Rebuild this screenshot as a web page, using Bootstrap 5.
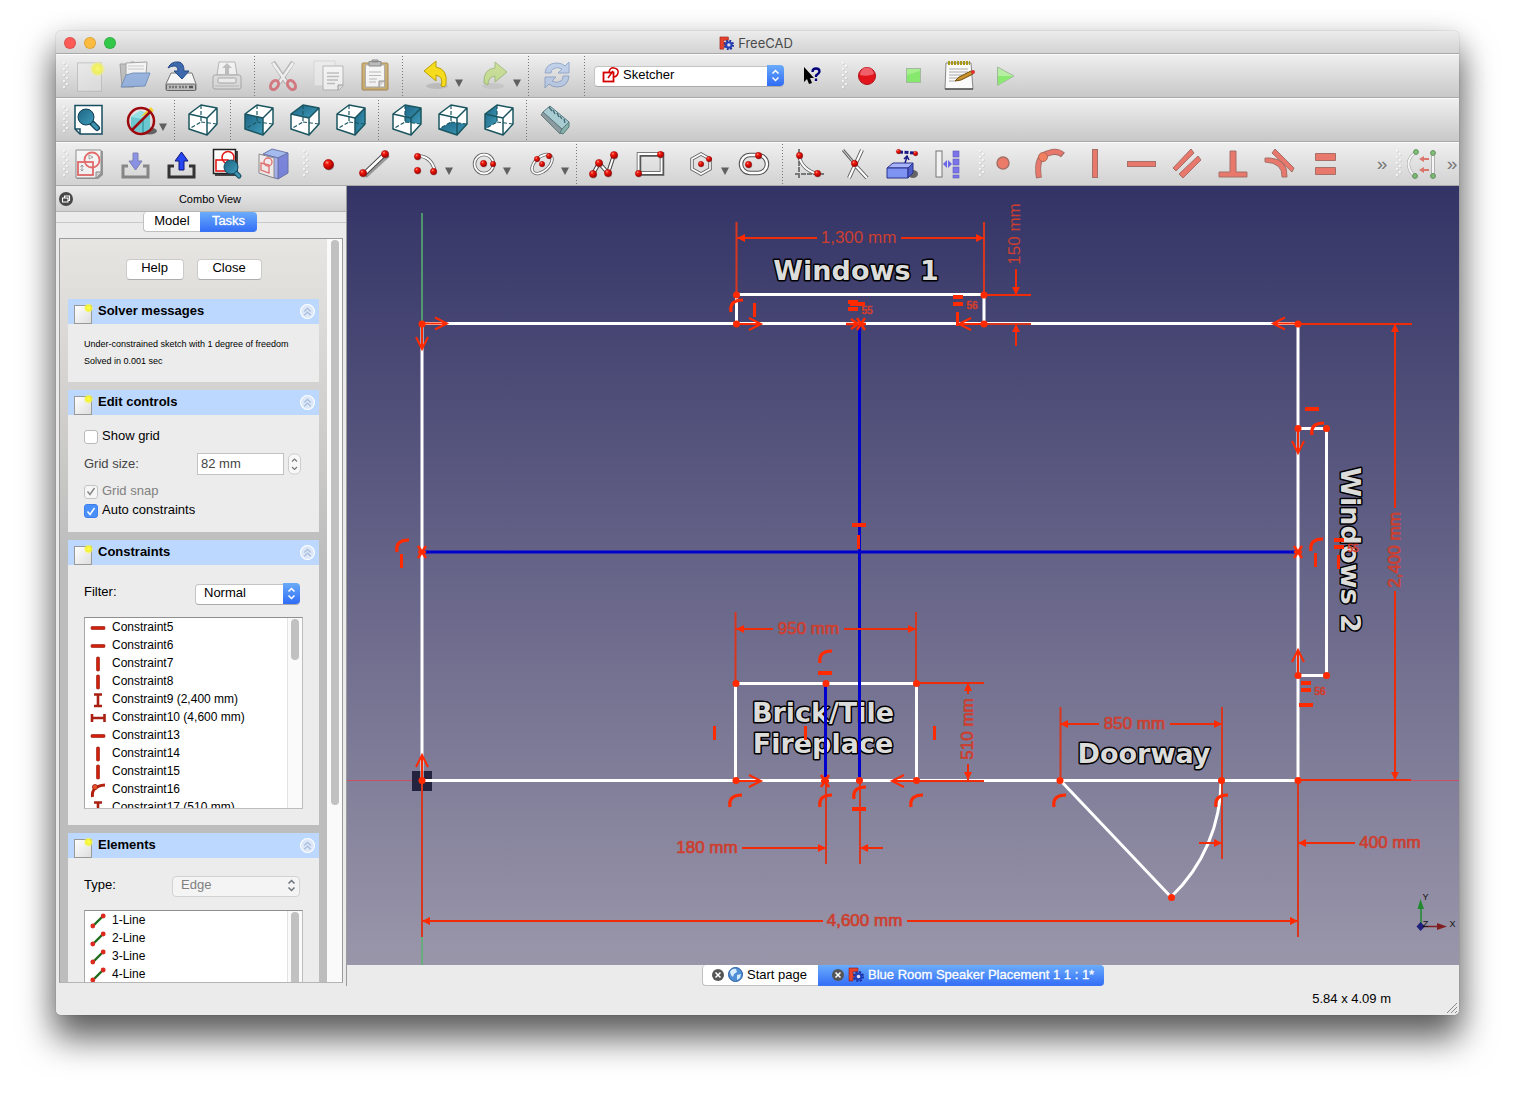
<!DOCTYPE html>
<html lang="en">
<head>
<meta charset="utf-8">
<meta name="viewport" content="width=device-width, initial-scale=1">
<title>FreeCAD</title>
<link href="https://cdn.jsdelivr.net/npm/bootstrap@5.3.0/dist/css/bootstrap.min.css" rel="stylesheet">
<style>
body{font-family:"Liberation Sans",Arial,sans-serif;font-size:13px;line-height:20px;color:#000;background:#fff;padding:31px 56px 80px;min-height:100vh;overflow-x:hidden}
.app-window{border-radius:5px;background:#ebebeb;flex:1;overflow:hidden;min-width:0}
.app-shell{min-height:calc(100vh - 111px);border-radius:5px;box-shadow:0 0 1px rgba(0,0,0,.5),0 22px 34px 2px rgba(0,0,0,.6),0 4px 28px rgba(0,0,0,.12)}
.title-bar{height:23px;background:linear-gradient(#ececec,#d3d3d3);border-bottom:1px solid #a9a9a9;color:#4a4a4a;font-family:Inter,sans-serif;position:relative;padding:2px 3px 0 0}
.lights{position:absolute;left:8px;top:6px;gap:8px}
.light{width:12px;height:12px;border-radius:50%;border:1px solid rgba(0,0,0,.12)}
.light.red{background:#fc5b57}.light.amber{background:#fdbc40}.light.green{background:#34c84a}
.tool-bar{height:44px;background:linear-gradient(#efefef,#c8c8c8);border-top:1px solid #fbfbfb;border-bottom:1px solid #a9a9a9}
.tool-bar.last{background:linear-gradient(#efefef,#d2d2d2)}
.tool{width:46px;height:42px;padding:0;border:0;background:none;flex:none}
.tool.drop{width:58px;padding-left:8px}
.tool svg.ico{width:32px;height:32px;display:inline-block;overflow:visible}
.tool.drop svg.ico{margin-left:4px}
.dropmark{width:8px;height:8px;margin:14px 0 0 3px}
.dim{opacity:.5}
.grip{width:20px;height:30px;margin-right:-10px;flex:none}
.grip svg{display:block;width:8px;height:30px;margin:0 auto}
.divide{width:10px;height:40px;flex:none;background:repeating-linear-gradient(#777 0 1px,transparent 1px 3px) 4px 0/1px 100% no-repeat}
.more{width:14px;flex:none;color:#777;font-size:19px;padding:0;border:0;background:none;line-height:20px;text-align:center}
.pick{position:relative}
.pick select{appearance:none;width:100%;height:21px;border:1px solid #c4c4c4;border-bottom-color:#aaa;border-radius:4px;background:#fff;font-size:13px;line-height:16px;padding:0 28px 4px 8px;color:#000;opacity:1}
.pick .cap{position:absolute;right:0;top:0;width:17px;height:21px;border-radius:0 4px 4px 0;background:linear-gradient(#6aabfa,#2f6cf6);pointer-events:none}
.pick .lead-ico{position:absolute;left:8px;top:1px;pointer-events:none}
.pick.off select{background:#f4f4f4;color:#808080;border-color:#d2d2d2}
.pick.off .cap{background:none}
.bench{width:190px;margin:0 5px 0 4px}
.bench select{padding-left:28px}
.side{width:291px;flex:none;border-right:1px solid #9b9b9b}
.dock-head{height:26px;background:linear-gradient(#ececec,#d0d0d0);border-bottom:1px solid #b5b5b5;font-size:11px;position:relative;padding-left:18px}
.dock-head button{position:absolute;left:2px;top:5px;width:15px;height:15px;padding:0;border:0;background:none;line-height:1}
.seg{position:relative;height:26px;padding-right:2px;background:linear-gradient(#c9c9c9,#c9c9c9) 0 10px/100% 1px no-repeat}
.seg button,.doc-tabs button{border:1px solid #c0c0c0;border-width:0 0 1px 1px;background:#fff;height:21px;padding:0 0 2px;line-height:18px;color:#000;font-size:13px}
.seg button{height:20px;width:57px}
.seg button:first-child,.doc-tabs button:first-child{border-radius:4px 0 0 4px}
.seg button.on,.doc-tabs button.on{background:linear-gradient(#6bacfb,#3570f7);color:#fff;border-color:#3a74ee;border-left:0;border-radius:0 4px 4px 0;-webkit-text-stroke:.3px #fff}
.task-scroll{margin:0 3px;border:1px solid #9b9b9b;border-bottom-color:#b5b5b5;height:745px;background:#fafafa}
.task-list{width:267px;height:743px;overflow:hidden;flex:none;background:linear-gradient(#e7e5e1,#bdbdbd 43%);padding:20px 8px 0}
.track{flex:1;padding:1px 3px 0 4px}
.thumb{border-radius:4px;background:#c1c1c1;width:8px}
.thumb.tall{height:565px}
.push-row{gap:13px;margin-bottom:19px}
.push{height:21px;width:58px;border:1px solid #cbcbcb;border-bottom-color:#adadad;border-radius:4px;background:#fff;line-height:16px;padding:0 0 3px;color:#000}
.push.wide{width:65px}
.task{background:#ececec;margin-bottom:8px}
.task h2{height:25px;margin:0;background:#bcd8ff;font-size:13px;line-height:22px;font-weight:bold;padding:0 4px 0 5px}
.task h2 span{padding:0 0 2px 1px}
.task-in{padding:11px 16px 12px}
.solver{font-size:9px;line-height:17px;padding:12px 16px;white-space:nowrap}
.tick{appearance:none;width:14px;height:14px;margin:2px 4px 0 0;border:1px solid #b9b9b9;border-radius:3px;background:#fff;flex:none}
.tick:checked{background:#4a90fa;border-color:#3d80ec}
.tick:disabled{background:#f6f6f6;border-color:#c4c4c4}
.tick-box{position:relative}
.tick-box svg{position:absolute;left:0;top:4px;pointer-events:none}
.tick-box.snap{height:19px;margin-top:5px;color:#808080}
.tick-box.snap svg{top:3px}
.size-row{height:24px;margin-top:6px;color:#444;padding-right:1px}
.num{width:87px;height:22px;border:1px solid #c2c2c2;background:#fff;padding:0 3px 2px;color:#444;font-size:13px}
.list-in{padding:17px 16px 16px}
.filter-row{margin-bottom:13px;padding-right:3px}
.filter-row .pick{width:105px;height:21px;margin-top:1px}
.type-row{margin-bottom:14px;padding-right:3px}
.type-row .pick{width:128px;height:21px}
.listing{border:1px solid #9b9b9b;border-color:#8f8f8f #bdbdbd #bdbdbd #a8a8a8;background:#fff;width:219px;height:192px;overflow:hidden;font-size:12px;line-height:18px}
.listing ul{flex:1}
.listing li{padding-left:5px;height:18px;white-space:nowrap}
.listing li svg{width:16px;height:16px;margin-right:6px}
.list-track{width:15px;border-left:1px solid #e3e3e3;background:#fafafa;padding:1px 3px}
.thumb.short{height:41px}
.thumb.full{height:180px}
.view-col{min-width:0}
.stage{background:linear-gradient(#333366,#9a96aa);line-height:0}
.stage svg{width:100%;height:auto}
.doc-tabs{height:21px}
.doc-tabs button{display:flex;align-items:center;padding:0 0 1px 9px;width:116px}
.doc-tabs button.on{width:286px;padding-left:14px}
.status{height:29px;padding-right:68px;position:relative}
.status svg{position:absolute;right:1px;bottom:1px}
</style>
</head>
<body class="d-flex flex-column">
<svg width="0" height="0" class="position-absolute" aria-hidden="true">
<defs>
<radialGradient id="ball" cx=".35" cy=".3" r=".7"><stop offset="0" stop-color="#ff9a8c"/><stop offset=".3" stop-color="#f21a0c"/><stop offset="1" stop-color="#a00"/></radialGradient>
<linearGradient id="teal" x2="1" y2="1"><stop offset="0" stop-color="#1d6484"/><stop offset="1" stop-color="#3f9cba"/></linearGradient>
<linearGradient id="paper" x2="1" y2="1"><stop offset="0" stop-color="#fff"/><stop offset="1" stop-color="#ddd"/></linearGradient>
<radialGradient id="sun"><stop offset="0" stop-color="#ffff50"/><stop offset=".55" stop-color="#f2f233"/><stop offset="1" stop-color="#ffff66" stop-opacity="0"/></radialGradient>
<symbol id="dots" viewBox="0 0 8 30"><g fill="#b4b4b4"><circle cx="2.500" cy="2.500" r="1"/><circle cx="5.500" cy="5.500" r="1"/><circle cx="2.500" cy="8.500" r="1"/><circle cx="5.500" cy="11.500" r="1"/><circle cx="2.500" cy="14.500" r="1"/><circle cx="5.500" cy="17.500" r="1"/><circle cx="2.500" cy="20.500" r="1"/><circle cx="5.500" cy="23.500" r="1"/><circle cx="2.500" cy="26.500" r="1"/></g><g fill="#fff"><circle cx="2" cy="2" r="1"/><circle cx="5" cy="5" r="1"/><circle cx="2" cy="8" r="1"/><circle cx="5" cy="11" r="1"/><circle cx="2" cy="14" r="1"/><circle cx="5" cy="17" r="1"/><circle cx="2" cy="20" r="1"/><circle cx="5" cy="23" r="1"/><circle cx="2" cy="26" r="1"/></g></symbol>
<symbol id="dot" viewBox="0 0 10 10" overflow="visible"><circle cx="5.700" cy="6" r="4.500" fill="#555" opacity=".5"/><circle cx="5" cy="5" r="4.500" fill="url(#ball)" stroke="#900" stroke-width=".6"/></symbol>
<symbol id="cube" viewBox="0 0 32 32"><path d="M2 10 14 1 30 4 20 14ZM2 10V25L20 31V14M20 31 30 20V4" fill="none" stroke="#1b5660" stroke-width="1.500" stroke-linejoin="round"/><path d="M14 1V18L2 25M14 18 30 20" fill="none" stroke="#1b5660" stroke-width="1.200" stroke-dasharray="4 2"/></symbol>
<symbol id="page" viewBox="0 0 20 20"><rect x="1.500" y="1.500" width="17" height="18" fill="url(#paper)" stroke="#999"/><circle cx="15.500" cy="4" r="5" fill="url(#sun)"/></symbol>
<symbol id="fold" viewBox="0 0 14 14"><circle cx="7" cy="7" r="6.500" fill="#dce8f8" stroke="#fff"/><path d="M4 7 7 4 10 7M4 10.500 7 7.500 10 10.500" fill="none" stroke="#a9bcdc" stroke-width="1.200"/></symbol>
<symbol id="freecad" viewBox="0 0 16 16"><path d="M1 1H10V4.500H5V7H9V10H5V14H1Z" fill="#e8412c" stroke="#8b2018" stroke-width=".6"/><circle cx="10.500" cy="9.500" r="4.500" fill="none" stroke="#1a2f9a" stroke-width="2" stroke-dasharray="2 1.530"/><circle cx="10.500" cy="9.500" r="2.900" fill="#dde" stroke="#2440b8" stroke-width="2.200"/></symbol>
<symbol id="c-h" viewBox="0 0 16 16"><rect x="1" y="6.500" width="14" height="3" rx="1" fill="#d3200c" stroke="#8d1708" stroke-width=".6"/></symbol>
<symbol id="c-v" viewBox="0 0 16 16"><rect x="6.500" y="1" width="3" height="14" rx="1" fill="#d3200c" stroke="#8d1708" stroke-width=".6"/></symbol>
<symbol id="c-i" viewBox="0 0 16 16"><path d="M4 2.500H12M4 14H12M8 2.500V14" stroke="#a92012" stroke-width="2.600" fill="none"/></symbol>
<symbol id="c-w" viewBox="0 0 16 16"><path d="M2 4V12M14.500 4V12M2 8H14.500" stroke="#a92012" stroke-width="2.600" fill="none"/></symbol>
<symbol id="c-p" viewBox="0 0 16 16"><path d="M2.500 15Q1 4 15 3" stroke="#b3200f" stroke-width="3" fill="none"/><circle cx="5" cy="5" r="2.600" fill="#e8502a" stroke="#8d1708" stroke-width=".7"/></symbol>
<symbol id="l-line" viewBox="0 0 16 16"><path d="M3 13 13 3" stroke="#1f6b1c" stroke-width="2.400"/><circle cx="2.800" cy="13" r="2.400" fill="#dd2a20"/><circle cx="13.200" cy="3" r="2.400" fill="#dd2a20"/></symbol>
<symbol id="closer" viewBox="0 0 12 12"><circle cx="6" cy="6" r="6" fill="#555"/><path d="M3.500 3.500 8.500 8.500M8.500 3.500 3.500 8.500" stroke="#fff" stroke-width="1.500"/></symbol>
<symbol id="updown" viewBox="0 0 17 21"><path d="M5.500 8.500 8.500 5.500 11.500 8.500M5.500 12.500 8.500 15.500 11.500 12.500" fill="none" stroke="currentColor" stroke-width="1.500"/></symbol>
<symbol id="tri" viewBox="0 0 8 8"><path d="M0 .5H8L4 8Z" fill="#606060"/></symbol>
<symbol id="sk" viewBox="0 0 32 32"><rect x="5" y="14" width="15" height="13" fill="none" stroke="#e31b1b" stroke-width="1.800"/><circle cx="19" cy="12" r="7.500" fill="none" stroke="#e31b1b" stroke-width="1.800"/><path d="M9 17V23M7.500 19 9 17 10.500 19M7.500 21.500 9 23 10.500 21.500M16 7 20 9 16 11Z" fill="none" stroke="#555" stroke-width=".8"/></symbol>
</defs></svg>

<main class="app-shell d-flex flex-column flex-grow-1">
<div class="app-window d-flex flex-column">
<header class="title-bar d-flex align-items-center justify-content-center">
<div class="lights d-flex"><span class="light red"></span><span class="light amber"></span><span class="light green"></span></div>
<svg width="15" height="15" class="me-1"><use href="#freecad"/></svg><span>FreeCAD</span>
</header>

<nav class="tool-bar d-flex align-items-center" aria-label="File">
<span class="grip"><svg><use href="#dots"/></svg></span>
<button class="tool" aria-label="New"><svg class="ico" viewBox="0 0 32 32"><g opacity=".75"><rect x="4.500" y="3" width="24" height="28" fill="url(#paper)" stroke="#aaa"/><rect x="4.500" y="3" width="24" height="28" fill="#ddd" opacity=".6"/><circle cx="24.500" cy="9" r="8" fill="url(#sun)"/></g></svg></button>
<button class="tool" aria-label="Open"><svg class="ico" viewBox="0 0 32 32" opacity=".6"><path d="M1 4H10L12 2H15V27H3Z" fill="#aaa" stroke="#777"/><path d="M7 3 28 2 27 15H7Z" fill="#fff" stroke="#777"/><path d="M9 6H25M9 9H25" stroke="#bbb"/><path d="M7 15 14 13H31L26 26 2 27Z" fill="#6b9ae0" stroke="#3465a4"/></svg></button>
<button class="tool" aria-label="Save"><svg class="ico" viewBox="0 0 32 32"><path d="M6 13H27L31 24V30H1V24Z" fill="#f5f5f5" stroke="#777"/><rect x="1.500" y="24" width="29" height="6.500" rx="1" fill="#bbb" stroke="#666"/><path d="M4 27H13M14 27H22" stroke="#777" stroke-width="2.500" stroke-dasharray="2 1"/><path d="M24 27H28" stroke="#555" stroke-width="2.500"/><path d="M3 8Q6 1 14 2 19 3 19 11H24L17 19 9 11H13Q13 6 9 6 6 6 3 8Z" fill="#3f69ad" stroke="#234a86"/></svg></button>
<button class="tool" aria-label="Print"><svg class="ico dim" viewBox="0 0 32 32"><path d="M8 2H24L26 15H6Z" fill="#fff" stroke="#888"/><path d="M16 3 21 8H18V14H14V8H11Z" fill="#999"/><rect x="2" y="15" width="28" height="14" rx="2" fill="#ddd" stroke="#777"/><rect x="7" y="18" width="18" height="5" rx="1" fill="#fff" stroke="#777"/><path d="M4 26H28" stroke="#999"/></svg></button>
<span class="divide"></span>
<button class="tool" aria-label="Cut"><svg class="ico dim" viewBox="0 0 32 32"><path d="M6 2 20 23M26 2 12 23" stroke="#888" stroke-width="4.500"/><path d="M6 3 20 23M26 3 12 23" stroke="#fff" stroke-width="2.500"/><ellipse cx="7.500" cy="25" rx="3.500" ry="5" transform="rotate(35 7.500 25)" fill="none" stroke="#d02030" stroke-width="3"/><ellipse cx="24.500" cy="25" rx="3.500" ry="5" transform="rotate(-35 24.500 25)" fill="none" stroke="#d02030" stroke-width="3"/></svg></button>
<button class="tool" aria-label="Copy"><svg class="ico" viewBox="0 0 32 32" opacity=".6"><path d="M1 1H22V26H1Z" fill="#eee" stroke="#ccc"/><path d="M10 6H30V26L26 30H10Z" fill="#fff" stroke="#999"/><path d="M14 13H26M14 16.500H26M14 20H25M14 23.500H22" stroke="#aaa" stroke-width="1.300"/><path d="M30 25H25V30" fill="#ddd" stroke="#777"/></svg></button>
<button class="tool" aria-label="Paste"><svg class="ico" viewBox="0 0 32 32" opacity=".7"><rect x="3" y="3" width="26" height="27" rx="1" fill="#c39a48" stroke="#8f6b20"/><rect x="6.500" y="5" width="19" height="22" fill="#fff" stroke="#999"/><path d="M10 1.500H22V6H10ZM13 0H19V2H13Z" fill="#aaa" stroke="#666"/><path d="M10 12H22M10 15.500H22M10 19H18M10 22H17" stroke="#aaa" stroke-width="1.200"/><path d="M26 21H20V27" fill="#ccc" stroke="#777"/></svg></button>
<span class="divide"></span>
<button class="tool drop d-flex align-items-center" aria-label="Undo"><svg class="ico" viewBox="0 0 32 32"><ellipse cx="17" cy="26" rx="11" ry="3" fill="#999" opacity=".4"/><path d="M4 11 16 1V7Q28 9 26 24 25 28 21 26 24 17 16 15V21Z" fill="#f6dc1c" stroke="#b9a00a"/></svg><svg class="dropmark"><use href="#tri"/></svg></button>
<button class="tool drop d-flex align-items-center" aria-label="Redo"><svg class="ico" viewBox="0 0 32 32" opacity=".5"><ellipse cx="15" cy="26" rx="11" ry="3" fill="#999" opacity=".4"/><path d="M29 12 17 2V8Q5 9 6 23L10 25Q10 17 17 16V22Z" fill="#b0dc50" stroke="#6a9a28"/></svg><svg class="dropmark"><use href="#tri"/></svg></button>
<span class="divide"></span>
<button class="tool" aria-label="Refresh"><svg class="ico" viewBox="0 0 32 32" opacity=".5"><path d="M4 13Q5 3 16 3 21 3 24 6L28 2V13H17L21 9Q16 6 12 9 10 10 10 13Z" fill="#9cbcee" stroke="#4c72b4"/><path d="M28 16Q27 27 16 27 11 27 8 24L4 28V17H15L11 21Q16 24 20 21 22 20 22 16Z" fill="#9cbcee" stroke="#4c72b4"/></svg></button>
<span class="divide"></span>
<div class="pick bench"><select aria-label="Workbench"><option>Sketcher</option></select><svg class="lead-ico" width="18" height="18" viewBox="0 0 18 18"><rect x="1.500" y="6.500" width="10" height="9" fill="none" stroke="#d40000" stroke-width="1.800"/><path d="M7 6Q8 1 12 2 17 3 16 7 15 11 11 11M11 5 6 12" fill="none" stroke="#d40000" stroke-width="1.500"/></svg><svg class="cap text-white"><use href="#updown"/></svg></div>
<button class="tool" aria-label="What's this"><svg class="ico" viewBox="0 0 32 32"><path d="M8 7V22L11 19 13 24 16 23 14 18H18Z" fill="#000"/><path d="M16.500 12Q16.500 8.500 20 8.500 23.500 8.500 23.500 11.500 23.500 13 20 15.500V17M20 18.500V21" fill="none" stroke="#00007a" stroke-width="2.300"/></svg></button>
<span class="grip"><svg><use href="#dots"/></svg></span>
<button class="tool" aria-label="Record macro"><svg class="ico" viewBox="0 0 32 32"><circle cx="15" cy="16" r="8.500" fill="#e2141c" stroke="#b01018"/><path d="M8 15A7 7 0 0 1 22 14Q15 17 8 15Z" fill="#f0606a"/></svg></button>
<button class="tool" aria-label="Stop macro"><svg class="ico" viewBox="0 0 32 32"><rect x="8.500" y="8.500" width="14" height="14" fill="#a5ef8d" stroke="#a4b8a0"/><path d="M9 15 22 11V22H9Z" fill="#86e86c"/></svg></button>
<button class="tool" aria-label="Macros"><svg class="ico" viewBox="0 0 32 32"><path d="M2 3H27L29 29H1Z" fill="#fafafa" stroke="#888"/><path d="M1 29H29" stroke="#555" stroke-width="1.500"/><path d="M4 3H26" stroke="#a89a18" stroke-width="4" stroke-dasharray="2 1"/><path d="M5 9H24M5 12H24M5 15H19M5 18H17M5 21H11" stroke="#aaa"/><path d="M11 21 15 17 27 11 29 14 17 20Z" fill="#c9922a" stroke="#704c0c"/><circle cx="29" cy="12" r="2" fill="#d33"/></svg></button>
<button class="tool" aria-label="Run macro"><svg class="ico" viewBox="0 0 32 32"><path d="M7.500 7 24 16 7.500 25.500Z" fill="#b6efa2" stroke="#a2b89e"/><path d="M8 16H23L8 25Z" fill="#8aea70"/></svg></button>
</nav>

<nav class="tool-bar d-flex align-items-center" aria-label="View">
<span class="grip"><svg><use href="#dots"/></svg></span>
<button class="tool" aria-label="Fit all"><svg class="ico" viewBox="0 0 32 32"><path d="M2 1.500H29V30H7L2 25Z" fill="#fff" stroke="#164c60" stroke-width="1.500"/><path d="M2 25H7V30" fill="none" stroke="#164c60" stroke-width="1.500"/><path d="M19 19 24 24" stroke="#123e54" stroke-width="6" stroke-linecap="round"/><path d="M20 20 24 24" stroke="#3f93b0" stroke-width="3.500" stroke-linecap="round"/><circle cx="13" cy="13" r="8" fill="url(#teal)" stroke="#123e54"/></svg></button>
<button class="tool drop d-flex align-items-center" aria-label="Draw style"><svg class="ico" viewBox="0 0 32 32"><ellipse cx="25" cy="27" rx="8" ry="3.500" fill="#333" opacity=".7"/><path d="M7 13 16 7 26 10V25L19 29 7 26Z" fill="#6cc8d0"/><path d="M7 13 16 7 26 10 19 15Z" fill="#97e2e6"/><path d="M19 15V29" stroke="#1e8a94"/><path d="M16 13 27 3 30 7Z" fill="#f0d431"/><circle cx="17" cy="17" r="13" fill="none" stroke="#9c0a10" stroke-width="2.500"/><path d="M7.500 26.500 26.500 7.500" stroke="#9c0a10" stroke-width="2.500"/></svg><svg class="dropmark"><use href="#tri"/></svg></button>
<span class="divide"></span>
<button class="tool" aria-label="Axonometric"><svg class="ico"><path d="M2 10 14 1 30 4V20L20 31 2 25Z" fill="#fff"/><use href="#cube"/></svg></button>
<span class="divide"></span>
<button class="tool" aria-label="Front"><svg class="ico"><path d="M2 10 14 1 30 4V20L20 31 2 25Z" fill="#fff"/><path d="M2 10 20 14V31L2 25Z" fill="url(#teal)"/><use href="#cube"/></svg></button>
<button class="tool" aria-label="Top"><svg class="ico"><path d="M2 10 14 1 30 4V20L20 31 2 25Z" fill="#fff"/><path d="M2 10 14 1 30 4 20 14Z" fill="url(#teal)"/><use href="#cube"/></svg></button>
<button class="tool" aria-label="Right"><svg class="ico"><path d="M2 10 14 1 30 4V20L20 31 2 25Z" fill="#fff"/><path d="M20 14 30 4V20L20 31Z" fill="url(#teal)"/><use href="#cube"/></svg></button>
<span class="divide"></span>
<button class="tool" aria-label="Rear"><svg class="ico"><path d="M2 10 14 1 30 4V20L20 31 2 25Z" fill="#fff"/><path d="M14 1 30 4V20L14 18Z" fill="url(#teal)"/><use href="#cube"/></svg></button>
<button class="tool" aria-label="Bottom"><svg class="ico"><path d="M2 10 14 1 30 4V20L20 31 2 25Z" fill="#fff"/><path d="M2 25 14 18 30 20 20 31Z" fill="url(#teal)"/><use href="#cube"/></svg></button>
<button class="tool" aria-label="Left"><svg class="ico"><path d="M2 10 14 1 30 4V20L20 31 2 25Z" fill="#fff"/><path d="M2 10 14 1V18L2 25Z" fill="url(#teal)"/><use href="#cube"/></svg></button>
<span class="divide"></span>
<button class="tool" aria-label="Measure"><svg class="ico" viewBox="0 0 32 32"><path d="M2 11 4 8 23 25 21 30Z" fill="#8a9a9e" stroke="#6a7a7e"/><path d="M4 8 11 2 30 18 23 25Z" fill="#a8ccd2" stroke="#587a80"/><path d="M10 3 13 7M14 6 16 10M18 9 20 13M21 12 23 15M25 15 26 19" stroke="#406870" stroke-width="1.300" fill="none"/><path d="M23 25 30 18V23L24 30 21 29Z" fill="#86b2aa" stroke="#587a80"/></svg></button>
</nav>

<nav class="tool-bar last d-flex align-items-center" aria-label="Sketcher">
<span class="grip"><svg><use href="#dots"/></svg></span>
<button class="tool" aria-label="New sketch"><svg class="ico" viewBox="0 0 32 32" opacity=".6"><path d="M4 3H30V27L25 31H4Z" fill="#666"/><path d="M3 2H28V25L23 30H3Z" fill="#fff" stroke="#555"/><use href="#sk"/><path d="M28 24H23V30" fill="#ccc" stroke="#555"/></svg></button>
<button class="tool" aria-label="Edit sketch"><svg class="ico dim" viewBox="0 0 32 32"><path d="M9 18H4V29H29V18H24" fill="none" stroke="#333" stroke-width="3"/><path d="M14 5H19V13H23L16.500 22 10 13H14Z" fill="#3344e8" stroke="#1a1f80"/></svg></button>
<button class="tool" aria-label="Leave sketch"><svg class="ico" viewBox="0 0 32 32"><path d="M9 18H4V29H29V18H24" fill="none" stroke="#333" stroke-width="3"/><path d="M14 22H19V13H23L16.500 4 10 13H14Z" fill="#2546f0" stroke="#10167a"/></svg></button>
<button class="tool" aria-label="View sketch"><svg class="ico" viewBox="0 0 32 32"><rect x="4" y="3" width="23" height="25" fill="#444"/><rect x="2.500" y="1.500" width="22" height="24" fill="#fff" stroke="#222" stroke-width="1.500"/><rect x="5" y="12" width="12" height="11" fill="none" stroke="#e31b1b" stroke-width="1.600"/><circle cx="17" cy="9.500" r="6" fill="none" stroke="#e31b1b" stroke-width="1.600"/><path d="M24 24 28 28" stroke="#134a60" stroke-width="5" stroke-linecap="round"/><path d="M24 24 28 28" stroke="#3f93b0" stroke-width="3" stroke-linecap="round"/><circle cx="20" cy="19" r="7" fill="url(#teal)" stroke="#134a60"/></svg></button>
<button class="tool" aria-label="Map sketch"><svg class="ico" viewBox="0 0 32 32" opacity=".7"><path d="M6 6 15 1 31 5 21 10Z" fill="#86a8f0" stroke="#39468f"/><path d="M21 10 31 5V25L21 31Z" fill="#4f5fd8" stroke="#39468f"/><path d="M6 6 21 10V31L6 26Z" fill="#8f9cf0" stroke="#39468f"/><path d="M2 6 17 10V30L2 25Z" fill="#f6eeee" stroke="#666"/><circle cx="11" cy="14" r="4" fill="none" stroke="#e04040" stroke-width="1.300"/><path d="M4 15 12 17V25L4 22Z" fill="none" stroke="#e04040" stroke-width="1.300"/></svg></button>
<span class="grip"><svg><use href="#dots"/></svg></span>
<button class="tool" aria-label="Point"><svg class="ico" viewBox="0 0 32 32"><use href="#dot" x="10" y="11" width="11" height="11"/></svg></button>
<button class="tool" aria-label="Line"><svg class="ico" viewBox="0 0 32 32"><path d="M6 28 29 7" stroke="#555" stroke-width="5" opacity=".5"/><path d="M5 26 27 5" stroke="#444" stroke-width="4.500"/><path d="M5 26 27 5" stroke="#fff" stroke-width="2.800"/><use href="#dot" x="0" y="21" width="8" height="8"/><use href="#dot" x="22" y="2" width="8" height="8"/></svg></button>
<button class="tool drop d-flex align-items-center" aria-label="Arc"><svg class="ico" viewBox="0 0 32 32"><path d="M8 8Q21 8 25 23" fill="none" stroke="#666" stroke-width="3.500"/><path d="M8 8Q21 8 25 23" fill="none" stroke="#fff" stroke-width="1.800"/><use href="#dot" x="4" y="5" width="7" height="7"/><use href="#dot" x="4" y="19" width="7" height="7"/><use href="#dot" x="20" y="20" width="7" height="7"/></svg><svg class="dropmark"><use href="#tri"/></svg></button>
<button class="tool drop d-flex align-items-center" aria-label="Circle"><svg class="ico" viewBox="0 0 32 32"><circle cx="16" cy="16" r="9.500" fill="none" stroke="#666" stroke-width="3.500"/><circle cx="16" cy="16" r="9.500" fill="none" stroke="#fff" stroke-width="1.800"/><use href="#dot" x="12" y="12" width="7" height="7"/><use href="#dot" x="22" y="13" width="6" height="6"/></svg><svg class="dropmark"><use href="#tri"/></svg></button>
<button class="tool drop d-flex align-items-center" aria-label="Ellipse"><svg class="ico" viewBox="0 0 32 32"><g transform="rotate(-42 16 16)"><ellipse cx="16" cy="16" rx="12" ry="7" fill="none" stroke="#666" stroke-width="3.200"/><ellipse cx="16" cy="16" rx="12" ry="7" fill="none" stroke="#fff" stroke-width="1.600"/></g><use href="#dot" x="13" y="13" width="6" height="6"/><use href="#dot" x="8" y="8" width="6" height="6"/><use href="#dot" x="20" y="5" width="6" height="6"/></svg><svg class="dropmark"><use href="#tri"/></svg></button>
<span class="divide"></span>
<button class="tool" aria-label="Polyline"><svg class="ico" viewBox="0 0 32 32"><path d="M4 26 10 15 19 25 25 7" fill="none" stroke="#444" stroke-width="4"/><path d="M4 26 10 15 19 25 25 7" fill="none" stroke="#fff" stroke-width="2"/><use href="#dot" x="0" y="22" width="8" height="8"/><use href="#dot" x="6" y="11" width="8" height="8"/><use href="#dot" x="15" y="21" width="8" height="8"/><use href="#dot" x="21" y="3" width="8" height="8"/></svg></button>
<button class="tool" aria-label="Rectangle"><svg class="ico" viewBox="0 0 32 32"><rect x="4" y="6.500" width="23" height="19" fill="none" stroke="#555" stroke-width="4.500"/><rect x="3.500" y="6" width="23" height="19" fill="none" stroke="#fff" stroke-width="2"/><use href="#dot" x="0" y="22" width="7" height="7"/><use href="#dot" x="22" y="3" width="7" height="7"/></svg></button>
<button class="tool drop d-flex align-items-center" aria-label="Polygon"><svg class="ico" viewBox="0 0 32 32"><path d="M15 6 24 11V21L15 26 6 21V11Z" fill="none" stroke="#666" stroke-width="3.500"/><path d="M15 6 24 11V21L15 26 6 21V11Z" fill="none" stroke="#fff" stroke-width="1.600"/><use href="#dot" x="12" y="13" width="6" height="6"/><use href="#dot" x="20" y="8" width="6" height="6"/></svg><svg class="dropmark"><use href="#tri"/></svg></button>
<button class="tool" aria-label="Slot"><svg class="ico" viewBox="0 0 32 32"><rect x="2" y="7" width="26" height="18" rx="9" fill="none" stroke="#555" stroke-width="4.500"/><rect x="2" y="7" width="26" height="18" rx="9" fill="none" stroke="#fff" stroke-width="2.400"/><use href="#dot" x="6" y="13" width="7" height="7"/><use href="#dot" x="16" y="4" width="7" height="7"/></svg></button>
<span class="divide"></span>
<button class="tool" aria-label="Fillet"><svg class="ico" viewBox="0 0 32 32"><path d="M4 1V30M0 26H29" stroke="#777" stroke-width="2" stroke-dasharray="5 1"/><path d="M4 8Q7 22 23 26" fill="none" stroke="#555" stroke-width="3.500"/><path d="M4 8Q7 22 23 26" fill="none" stroke="#fff" stroke-width="2"/><use href="#dot" x="1" y="4" width="7" height="7"/><use href="#dot" x="19" y="22" width="7" height="7"/></svg></button>
<button class="tool" aria-label="Trim"><svg class="ico" viewBox="0 0 32 32"><path d="M21 2 8 30M13 16 26 30" stroke="#555" stroke-width="4"/><path d="M21 2 8 30M13 16 26 30" stroke="#fff" stroke-width="2.200"/><path d="M2 2 13 15" stroke="#666" stroke-width="3"/><path d="M2 2 13 15" stroke="#ddd" stroke-width="1"/><use href="#dot" x="10" y="12" width="7" height="7"/></svg></button>
<button class="tool" aria-label="External geometry"><svg class="ico" viewBox="0 0 32 32"><ellipse cx="26" cy="26" rx="5" ry="4" fill="#333" opacity=".7"/><path d="M0 20 6 15H26L21 20Z" fill="#a8b4fa" stroke="#28338a"/><path d="M0 20H21V30H0Z" fill="#7f93f2" stroke="#28338a"/><path d="M21 20 26 15V25L21 30Z" fill="#4c5cc8" stroke="#28338a"/><path d="M12 4 28 5" stroke="#1a1a88" stroke-width="3" stroke-dasharray="4 1.500"/><path d="M18 15 20 9M17 11 20 8 22 12" stroke="#1a1a88" stroke-width="1.500" fill="none"/><use href="#dot" x="9" y="1" width="5" height="5"/><use href="#dot" x="26" y="3" width="5" height="5"/></svg></button>
<button class="tool" aria-label="Symmetric copy"><svg class="ico" viewBox="0 0 32 32"><rect x="3" y="3" width="6" height="26" fill="#f2f2f2" stroke="#777"/><path d="M10 16 14 12V20ZM19 16 15 12V20Z" fill="#6a66e8"/><g fill="#7a76ea" stroke="#5a58b8" stroke-width=".6"><rect x="20" y="3" width="6" height="6"/><rect x="20" y="11" width="6" height="6"/><rect x="20" y="19" width="6" height="6"/><rect x="20" y="27" width="6" height="3"/></g></svg></button>
<span class="grip"><svg><use href="#dots"/></svg></span>
<button class="tool" aria-label="Coincident"><svg class="ico" viewBox="0 0 32 32"><circle cx="14" cy="15" r="6" fill="#ec7a68" stroke="#a57068" stroke-width="1.500"/></svg></button>
<button class="tool" aria-label="Point on object"><svg class="ico" viewBox="0 0 32 32"><path d="M4 30Q0 8 14 5 22 2 28 7" fill="none" stroke="#a57068" stroke-width="6"/><path d="M4 29Q0 8 14 5 22 2 27 6" fill="none" stroke="#e8776c" stroke-width="4.200"/><circle cx="8" cy="9" r="4.500" fill="#f08060" stroke="#b06a58"/></svg></button>
<button class="tool" aria-label="Vertical"><svg class="ico" viewBox="0 0 32 32"><rect x="11.500" y="1.500" width="5" height="28" fill="#e8776c" stroke="#a57068"/></svg></button>
<button class="tool" aria-label="Horizontal"><svg class="ico" viewBox="0 0 32 32"><rect x=".5" y="13.500" width="28" height="5" fill="#e8776c" stroke="#a57068"/></svg></button>
<button class="tool" aria-label="Parallel"><svg class="ico" viewBox="0 0 32 32"><path d="M0 20 18 1 21 5 3 23ZM6 26 25 8 28 12 10 30Z" fill="#e8776c" stroke="#a57068"/></svg></button>
<button class="tool" aria-label="Perpendicular"><svg class="ico" viewBox="0 0 32 32"><path d="M11 3H17V24H28V29H0V24H11Z" fill="#e8776c" stroke="#a57068"/></svg></button>
<button class="tool" aria-label="Tangent"><svg class="ico" viewBox="0 0 32 32"><path d="M0 10H5Q23 11 22 29H17Q18 15 0 14ZM7 5 10 1 29 20 27 24Z" fill="#e8776c" stroke="#a57068"/></svg></button>
<button class="tool" aria-label="Equal"><svg class="ico" viewBox="0 0 32 32"><path d="M4.500 5.500H24.500V12.500H4.500ZM4.500 19.500H24.500V26.500H4.500Z" fill="#e8776c" stroke="#a57068"/></svg></button>
<button class="more ms-auto" aria-label="More constraints">»</button>
<span class="grip"><svg><use href="#dots"/></svg></span>
<button class="tool" aria-label="Close shape"><svg class="ico" viewBox="0 0 32 32" opacity=".7"><path d="M10 4Q-4 14 8 28" fill="none" stroke="#888" stroke-width="3"/><path d="M10 4Q-4 14 8 28" fill="none" stroke="#fff" stroke-width="2"/><path d="M27 5V28" stroke="#888" stroke-width="3.500"/><path d="M27 5V28" stroke="#fff" stroke-width="2"/><path d="M13 11 18 8V10H23V12H18V14ZM13 22 18 19V21H23V23H18V25Z" fill="#d84a3c"/><g fill="#56b048" stroke="#2a6a20"><circle cx="10" cy="4" r="2.400"/><circle cx="27" cy="5" r="2.400"/><circle cx="9" cy="28" r="2.400"/><circle cx="27" cy="28" r="2.400"/></g></svg></button>
<button class="more" aria-label="More tools">»</button>
</nav>

<div class="d-flex flex-grow-1">
<aside class="side">
<div class="dock-head d-flex align-items-center justify-content-center"><button aria-label="Float panel"><svg width="14" height="14" viewBox="0 0 14 14"><circle cx="7" cy="7" r="7" fill="#484848"/><path d="M5.500 6V4H10.500V8.500H9M3.500 6H9V10H3.500Z" fill="none" stroke="#fff" stroke-width="1.100"/></svg></button>Combo View</div>
<div class="seg d-flex justify-content-center"><button>Model</button><button class="on">Tasks</button></div>
<div class="task-scroll d-flex">
<div class="task-list">
<div class="push-row d-flex justify-content-center"><button class="push">Help</button><button class="push wide">Close</button></div>
<section class="task">
<h2 class="d-flex align-items-center"><svg width="20" height="20" class="mt-1 me-1"><use href="#page"/></svg><span class="flex-grow-1">Solver messages</span><svg width="15" height="15"><use href="#fold"/></svg></h2>
<div class="solver">Under-constrained sketch with 1 degree of freedom<br>Solved in 0.001 sec</div>
</section>
<section class="task">
<h2 class="d-flex align-items-center"><svg width="20" height="20" class="mt-1 me-1"><use href="#page"/></svg><span class="flex-grow-1">Edit controls</span><svg width="15" height="15"><use href="#fold"/></svg></h2>
<div class="task-in">
<div class="tick-box d-flex align-items-center"><input type="checkbox" class="tick" id="showgrid"><label for="showgrid">Show grid</label></div>
<div class="size-row d-flex align-items-center"><label for="gridsize" class="flex-grow-1">Grid size:</label><input id="gridsize" class="num" value="82 mm"><svg width="14" height="22" viewBox="0 0 14 22" class="ms-1"><rect x=".5" y="1" width="12" height="20" rx="5" fill="#f8f8f8" stroke="#ccc"/><path d="M4 8.500 6.500 6 9 8.500M4 14 6.500 16.500 9 14" fill="none" stroke="#777" stroke-width="1.200"/></svg></div>
<div class="tick-box snap d-flex align-items-center"><input type="checkbox" class="tick" id="snap" checked disabled><svg width="14" height="14"><path d="M3.500 7.500 6 10.500 10.500 4" fill="none" stroke="#888" stroke-width="1.500"/></svg><label for="snap">Grid snap</label></div>
<div class="tick-box d-flex align-items-center"><input type="checkbox" class="tick" id="autoc" checked><svg width="14" height="14"><path d="M3.500 7.500 6 10.500 10.500 4" fill="none" stroke="#fff" stroke-width="1.500"/></svg><label for="autoc">Auto constraints</label></div>
</div>
</section>
<section class="task">
<h2 class="d-flex align-items-center"><svg width="20" height="20" class="mt-1 me-1"><use href="#page"/></svg><span class="flex-grow-1">Constraints</span><svg width="15" height="15"><use href="#fold"/></svg></h2>
<div class="list-in">
<div class="filter-row d-flex justify-content-between"><label for="filter">Filter:</label><div class="pick"><select id="filter"><option>Normal</option></select><svg class="cap text-white"><use href="#updown"/></svg></div></div>
<div class="listing d-flex"><ul class="list-unstyled mb-0">
<li><svg><use href="#c-h"/></svg>Constraint5</li>
<li><svg><use href="#c-h"/></svg>Constraint6</li>
<li><svg><use href="#c-v"/></svg>Constraint7</li>
<li><svg><use href="#c-v"/></svg>Constraint8</li>
<li><svg><use href="#c-i"/></svg>Constraint9 (2,400 mm)</li>
<li><svg><use href="#c-w"/></svg>Constraint10 (4,600 mm)</li>
<li><svg><use href="#c-h"/></svg>Constraint13</li>
<li><svg><use href="#c-v"/></svg>Constraint14</li>
<li><svg><use href="#c-v"/></svg>Constraint15</li>
<li><svg><use href="#c-p"/></svg>Constraint16</li>
<li><svg><use href="#c-i"/></svg>Constraint17 (510 mm)</li>
</ul><div class="list-track"><div class="thumb short"></div></div></div>
</div>
</section>
<section class="task mb-0">
<h2 class="d-flex align-items-center"><svg width="20" height="20" class="mt-1 me-1"><use href="#page"/></svg><span class="flex-grow-1">Elements</span><svg width="15" height="15"><use href="#fold"/></svg></h2>
<div class="list-in">
<div class="type-row d-flex justify-content-between"><label for="etype">Type:</label><div class="pick off"><select id="etype" disabled><option>Edge</option></select><svg class="cap text-secondary"><use href="#updown"/></svg></div></div>
<div class="listing d-flex"><ul class="list-unstyled mb-0">
<li><svg><use href="#l-line"/></svg>1-Line</li>
<li><svg><use href="#l-line"/></svg>2-Line</li>
<li><svg><use href="#l-line"/></svg>3-Line</li>
<li><svg><use href="#l-line"/></svg>4-Line</li>
</ul><div class="list-track"><div class="thumb full"></div></div></div>
</div>
</section>
</div>
<div class="track"><div class="thumb tall"></div></div>
</div>
</aside>

<section class="view-col flex-grow-1 d-flex flex-column">
<div class="stage">
<svg viewBox="347 186 1112 779" role="img" aria-label="Sketch view" font-family="'Liberation Sans',Arial,sans-serif">
<defs>
<path id="m-arc" d="M2 14Q0 2 14 2" fill="none" stroke="#ff2a00" stroke-width="3.200"/>
<path id="m-v" d="M0 0V14" stroke="#ff2a00" stroke-width="3"/>
<path id="m-h" d="M0 0H14" stroke="#ff2a00" stroke-width="4"/>
<path id="m-eq" d="M0 0H10M0 7H10" stroke="#ff2a00" stroke-width="4"/>
<path id="m-open" d="M0 0H24M13-6 25 0 13 6" fill="none" stroke="#ff2a00" stroke-width="2"/>
<path id="m-x" d="M-4-6 4 6M4-6-4 6M-4 0H4" stroke="#ff2a00" stroke-width="2.500"/>
<path id="m-head" d="M0 0-8-4V4Z" fill="#ff2a00"/>
<circle id="pt" r="3.500" fill="#ff2a00"/>
</defs>
<path d="M422 213V965" stroke="#58b470" stroke-width="1.500"/>
<path d="M347 780.500H1459" stroke="#c85060" stroke-width="1"/>
<rect x="412" y="771" width="20" height="20" fill="#23233f"/>
<g font-family="'DejaVu Sans',sans-serif" font-weight="bold" font-size="27" fill="#dcdcda" stroke="#000" stroke-width="3" stroke-linejoin="round" paint-order="stroke" text-anchor="middle">
<text x="856" y="280">Windows 1</text>
<text x="823" y="722">Brick/Tile</text>
<text x="823" y="753">Fireplace</text>
<text x="1144" y="763">Doorway</text>
<text transform="translate(1341 550) rotate(90)">Windows 2</text>
</g>
<g fill="none" stroke="#fff" stroke-width="3">
<rect x="422" y="323.500" width="876" height="457"/>
<path d="M736.500 323V294.500H984V323M1298 428.500H1326.500V675.500H1298M735.500 780V683.500H916.500V780M1060 780 1171 897A161 161 0 0 0 1221 780"/>
</g>
<path d="M859.500 324V780M422 552H1298M825.500 683V780" stroke="#0000cc" stroke-width="3"/>
<path d="M736.500 222V295M984 222V295M735.500 612V683M916 612V683M1060.500 707V780M1222 707V859M826 780V864M860 780V864M422 780V937M1298 780V937M984 324H1031" stroke="#d8371f" stroke-width="2"/>
<path d="M737 238H817M901 238H984M984 295H1031M1016 269V295M1016 346V324M1298 324H1412M1298 780H1411M1395 324V508M1395 591V780M736 629H773M844 629H916M917 683H984M917 781H984M968 683V694M968 764V780M1060 724H1099M1170 724H1222M1298 843H1355M1199 843H1222M742 848H826M860 848H883M422 921H823M907 921H1298" stroke="#f02c08" stroke-width="2"/>
<g>
<use href="#m-head" x="984" y="238"/><use href="#m-head" transform="translate(737 238) rotate(180)"/>
<use href="#m-head" x="916" y="629"/><use href="#m-head" transform="translate(736 629) rotate(180)"/>
<use href="#m-head" x="1222" y="724"/><use href="#m-head" transform="translate(1060 724) rotate(180)"/>
<use href="#m-head" x="1222" y="843"/><use href="#m-head" transform="translate(1298 843) rotate(180)"/>
<use href="#m-head" x="826" y="848"/><use href="#m-head" transform="translate(860 848) rotate(180)"/>
<use href="#m-head" x="1298" y="921"/><use href="#m-head" transform="translate(422 921) rotate(180)"/>
<use href="#m-head" transform="translate(1016 295) rotate(90)"/><use href="#m-head" transform="translate(1016 324) rotate(-90)"/>
<use href="#m-head" transform="translate(1395 780) rotate(90)"/><use href="#m-head" transform="translate(1395 324) rotate(-90)"/>
<use href="#m-head" transform="translate(968 780) rotate(90)"/><use href="#m-head" transform="translate(968 683) rotate(-90)"/>
</g>
<g>
<use href="#m-open" x="422" y="323.500"/><use href="#m-open" transform="translate(422 324) rotate(90)"/><use href="#m-open" transform="translate(422 780) rotate(-90)"/>
<use href="#m-open" transform="translate(1298 323.500) rotate(180)"/><use href="#m-open" transform="translate(1298 428) rotate(90)"/><use href="#m-open" transform="translate(1298 675) rotate(-90)"/>
<use href="#m-open" x="736" y="324"/><use href="#m-open" transform="translate(984 324) rotate(180)"/>
<use href="#m-open" x="736" y="781"/><use href="#m-open" transform="translate(917 781) rotate(180)"/>
<use href="#m-x" x="422" y="552"/><use href="#m-x" x="1298" y="552"/><use href="#m-x" x="825" y="781"/><use href="#m-x" x="861" y="324"/>
<path d="M846 324H866M851 319 858 324 851 329" fill="none" stroke="#ff2a00" stroke-width="2.500"/>
</g>
<g>
<use href="#m-arc" x="728" y="793"/><use href="#m-arc" x="818" y="793"/><use href="#m-arc" x="852" y="785"/><use href="#m-arc" x="909" y="793"/><use href="#m-arc" x="1052" y="793"/><use href="#m-arc" x="1214" y="793"/><use href="#m-arc" x="818" y="649"/><use href="#m-arc" x="729" y="298"/><use href="#m-arc" x="1310" y="421"/><use href="#m-arc" x="1309" y="537"/><use href="#m-arc" x="395" y="538"/>
<use href="#m-v" x="754.500" y="303"/><use href="#m-v" x="714.500" y="726"/><use href="#m-v" x="805.500" y="726"/><use href="#m-v" x="934.500" y="726"/><use href="#m-v" x="858.500" y="535"/><use href="#m-v" x="1315.500" y="553"/><use href="#m-v" x="1338.500" y="555"/><use href="#m-v" x="401.500" y="554"/><use href="#m-v" x="957.500" y="312"/>
<use href="#m-h" x="852" y="525"/><use href="#m-h" x="818" y="673"/><use href="#m-h" x="852" y="809"/><use href="#m-h" x="1305" y="409"/><use href="#m-h" x="1299" y="705"/>
<use href="#m-eq" x="953" y="297"/><use href="#m-eq" x="848" y="302"/><path d="M850 304H865" stroke="#ff2a00" stroke-width="4"/><use href="#m-eq" x="1334" y="540"/><use href="#m-eq" x="1301" y="683"/>
</g>
<g>
<use href="#pt" x="736.500" y="295"/><use href="#pt" x="984" y="295"/><use href="#pt" x="736.500" y="324"/><use href="#pt" x="984" y="324"/><use href="#pt" x="422" y="324"/><use href="#pt" x="1298" y="324"/><use href="#pt" x="1298" y="428.500"/><use href="#pt" x="1326.500" y="428.500"/><use href="#pt" x="1298" y="675.500"/><use href="#pt" x="1326.500" y="675.500"/><use href="#pt" x="736" y="683.500"/><use href="#pt" x="826" y="683.500"/><use href="#pt" x="916.500" y="683.500"/><use href="#pt" x="736" y="780.500"/><use href="#pt" x="825" y="780.500"/><use href="#pt" x="859.500" y="780.500"/><use href="#pt" x="916.500" y="780.500"/><use href="#pt" x="1060" y="780.500"/><use href="#pt" x="1221.500" y="780.500"/><use href="#pt" x="1298" y="780.500"/><use href="#pt" x="422" y="780.500"/><use href="#pt" x="1171.500" y="897.500"/>
</g>
<g font-size="17" fill="#cc3f30" stroke="#cc3f30" stroke-width=".7" text-anchor="middle">
<text x="858.500" y="243" stroke="none">1,300 mm</text>
<text x="808.500" y="634">950 mm</text>
<text x="1134.500" y="729">850 mm</text>
<text x="1390" y="848">400 mm</text>
<text x="707" y="853">180 mm</text>
<text x="864.500" y="926">4,600 mm</text>
<text transform="translate(1020 234) rotate(-90)" stroke="none">150 mm</text>
<text transform="translate(1400 550) rotate(-90)">2,400 mm</text>
<text transform="translate(973 729) rotate(-90)">510 mm</text>
<g font-size="10" fill="#e8321a"><text x="867" y="314">55</text><text x="972" y="309">56</text><text x="1353" y="552">55</text><text x="1320" y="695">56</text></g>
</g>
<path d="M1421 926V906" stroke="#1f8a30" stroke-width="1.500"/><path d="M1417.500 909 1420.500 899 1424 909Z" fill="#1f8a30"/>
<path d="M1421 926.500H1439" stroke="#802020" stroke-width="1.500"/><path d="M1437 923 1447 926.500 1437 930Z" fill="#802020"/>
<path d="M1416.500 926.500 1420.500 922 1425 926.500 1420.500 931Z" fill="#20207c"/>
<g font-size="9" fill="#111" text-anchor="middle"><text x="1425.500" y="900">Y</text><text x="1452.500" y="927">X</text><text x="1425.500" y="927">Z</text></g>
</svg>
</div>
<div class="doc-tabs d-flex justify-content-center">
<button><svg width="12" height="12" class="me-1"><use href="#closer"/></svg><svg width="15" height="15" viewBox="0 0 15 15" class="me-1"><circle cx="7.500" cy="7.500" r="7" fill="#4f8fd8" stroke="#2c5c9c"/><path d="M2 5Q4 1 8 2L9 5 6 7 5 10 3 8ZM9 8 13 7 12 11 9 13Z" fill="#d8ecfc"/></svg>Start page</button>
<button class="on"><svg width="12" height="12" class="me-1"><use href="#closer"/></svg><svg width="16" height="16" class="me-1"><use href="#freecad"/></svg>Blue Room Speaker Placement 1 1 : 1*</button>
</div>
</section>
</div>
<footer class="status d-flex align-items-center justify-content-end"><span class="pb-1">5.84 x 4.09 m</span><svg width="12" height="12"><path d="M1 11 11 1M5 11 11 5M9 11 11 9" stroke="#888"/></svg></footer>
</div>
</main>
<script src="https://cdn.jsdelivr.net/npm/bootstrap@5.3.0/dist/js/bootstrap.bundle.min.js"></script>
</body>
</html>
